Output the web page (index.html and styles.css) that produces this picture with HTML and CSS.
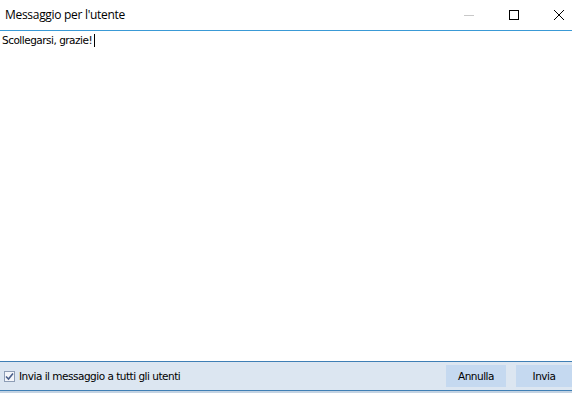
FILE: index.html
```html
<!DOCTYPE html>
<html>
<head>
<meta charset="utf-8">
<link rel="stylesheet" href="styles.css">
</head>
<body>
<div class="window">
  <div class="titlebar">
    <span class="title">Messaggio per l'utente</span>
    <div class="controls">
      <span class="ctl min"><svg width="12" height="12" viewBox="0 0 12 12"><path d="M1 6.5h10" stroke="#c8c8c8" stroke-width="1"/></svg></span>
      <span class="ctl max"><svg width="12" height="12" viewBox="0 0 12 12"><rect x="1.5" y="1.5" width="9" height="9" fill="none" stroke="#000" stroke-width="1"/></svg></span>
      <span class="ctl close"><svg width="12" height="12" viewBox="0 0 12 12"><path d="M1 1L11 11M11 1L1 11" stroke="#000" stroke-width="1"/></svg></span>
    </div>
  </div>
  <div class="content">
    <div class="message">Scollegarsi, grazie!<span class="caret"></span></div>
  </div>
  <div class="footer">
    <label class="check">
      <span class="box"><svg width="9" height="9" viewBox="0 0 9 9"><path d="M1 4.5L3.5 7L8 1.5" fill="none" stroke="#4a5f8a" stroke-width="1.6"/></svg></span>
      <span class="check-label">Invia il messaggio a tutti gli utenti</span>
    </label>
    <div class="buttons">
      <button class="btn btn-cancel">Annulla</button>
      <button class="btn btn-send">Invia</button>
    </div>
  </div>
  <div class="bottom-edge"></div>
</div>
</body>
</html>
```
FILE: styles.css
```css
* { box-sizing: border-box; }
html, body { margin: 0; padding: 0; background: #fff; }
body { width: 572px; height: 393px; overflow: hidden; }
.window { display: flex; flex-direction: column; height: 393px; overflow: hidden; }
.titlebar {
  height: 31px;
  display: flex;
  align-items: center;
  justify-content: space-between;
  border-bottom: 1px solid #3a9ad6;
  padding-left: 5px;
  flex: none;
}
.title {
  font-family: "Open Sans", "Noto Sans", sans-serif;
  font-size: 12px;
  color: #000;
  letter-spacing: -0.3px;
  margin-top: -2px;
}
.controls { display: flex; height: 30px; margin-right: -9px; }
.ctl { width: 45px; height: 30px; display: flex; align-items: center; justify-content: center; }
.ctl svg { display: block; }
.content { flex: 1; padding: 3px 2px; }
.message {
  font-family: "DejaVu Sans", "Liberation Sans", sans-serif;
  font-size: 10.5px;
  color: #000;
  letter-spacing: -0.5px;
  line-height: 13px;
  display: flex;
  align-items: center;
}
.caret { display: inline-block; width: 1px; height: 13px; background: #000; margin-left: 2px; }
.footer {
  flex: none;
  height: 30px;
  background: #dce6f1;
  border-top: 1px solid #3f7fb5;
  border-bottom: 1px solid #3f7fb5;
  display: flex;
  align-items: center;
  justify-content: space-between;
  padding-left: 4px;
}
.check { display: flex; align-items: center; gap: 4px; }
.box {
  width: 11px; height: 11px;
  border: 1px solid #8d9db5;
  background: #f4f6fa;
  display: flex; align-items: center; justify-content: center;
}
.check-label, .btn {
  font-family: "DejaVu Sans", "Liberation Sans", sans-serif;
  font-size: 10.5px;
  letter-spacing: -0.5px;
  color: #000;
}
.buttons { display: flex; gap: 10px; height: 22px; align-self: center; }
.btn {
  border: none;
  background: #c5d9f0;
  height: 22px;
  padding: 0;
  margin: 0;
}
.btn-cancel { width: 60px; }
.btn-send { width: 56px; }
.bottom-edge { flex: none; height: 2px; background: #c4d3e3; }
```
